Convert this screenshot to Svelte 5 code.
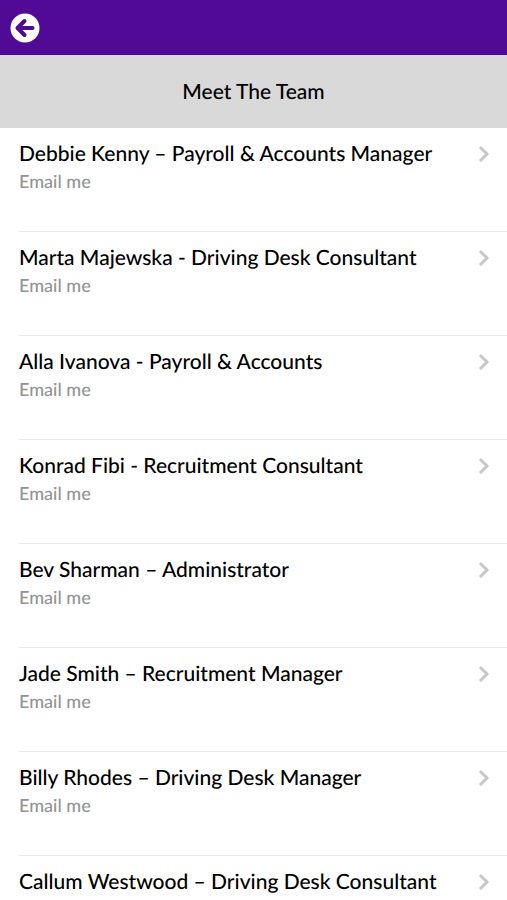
<script lang="ts">
  let { title = 'Meet The Team' }: { title?: string } = $props()

  const team = [
    'Debbie Kenny – Payroll & Accounts Manager',
    'Marta Majewska - Driving Desk Consultant',
    'Alla Ivanova - Payroll & Accounts',
    'Konrad Fibi - Recruitment Consultant',
    'Bev Sharman – Administrator',
    'Jade Smith – Recruitment Manager',
    'Billy Rhodes – Driving Desk Manager',
    'Callum Westwood – Driving Desk Consultant',
  ]
</script>

<div class="screen">
  <header>
    <button class="back" aria-label="Back">
      <svg viewBox="0 0 30 30" aria-hidden="true">
        <circle cx="15" cy="15" r="14.5" fill="#fff" />
        <path d="M14.5 8 7.5 15l7 7M8.5 15h14" fill="none" stroke="#500a96" stroke-width="4" stroke-linecap="round" stroke-linejoin="round" />
      </svg>
    </button>
  </header>

  <h1>{title}</h1>

  <ul>
    {#each team as name}
      <li>
        <a href="#email">
          <span class="text">
            <span class="name">{name}</span>
            <span class="sub">Email me</span>
          </span>
          <svg class="chevron" viewBox="0 0 12 18" aria-hidden="true">
            <path d="m2 2 7 7-7 7" fill="none" stroke="#c7c7c7" stroke-width="3" />
          </svg>
        </a>
      </li>
    {/each}
  </ul>
</div>

<style>
  :global(body) {
    margin: 0;
    background: #fff;
  }

  .screen {
    height: 100vh;
    overflow: hidden;
    font-family: Lato, sans-serif;
    font-weight: 500;
    text-rendering: geometricPrecision;
    color: #000;
  }

  header {
    display: flex;
    align-items: center;
    height: 55px;
    padding: 0 10px;
    background: #500a96;
  }

  .back {
    width: 30px;
    height: 30px;
    padding: 0;
    border: 0;
    background: none;
    cursor: pointer;
  }

  .back svg {
    display: block;
  }

  h1 {
    margin: 0;
    padding: 24px 20px 23px;
    background: #d9d9d9;
    font-size: 21px;
    font-weight: 500;
    line-height: 26px;
    text-align: center;
  }

  ul {
    margin: 0;
    padding: 0 0 0 19px;
    list-style: none;
  }

  li + li {
    border-top: 1px solid #e9e9e9;
  }

  a {
    display: flex;
    justify-content: space-between;
    padding: 12px 17px 37px 0;
    color: inherit;
    text-decoration: none;
  }

  .name,
  .sub {
    display: block;
  }

  .name {
    font-size: 21px;
    line-height: 28px;
  }

  .sub {
    font-size: 18px;
    line-height: 26px;
    color: #949494;
  }

  .chevron {
    flex-shrink: 0;
    width: 12px;
    height: 18px;
    margin-top: 5px;
  }
</style>
